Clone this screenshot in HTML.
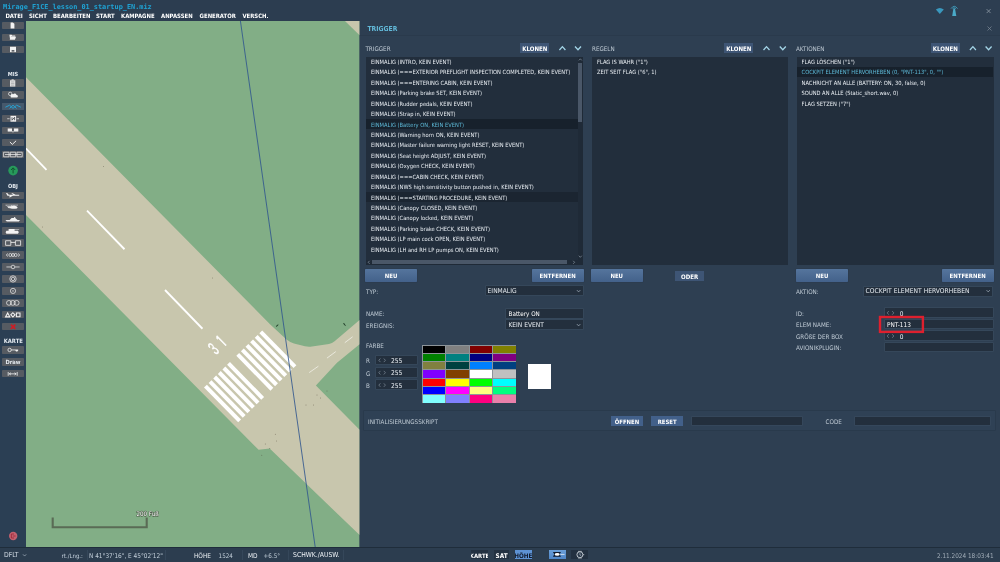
<!DOCTYPE html><html lang="de"><head><meta charset="utf-8"><title>Mirage_F1CE_lesson_01_startup_EN.miz</title><style>
*{box-sizing:border-box}
html,body{margin:0;padding:0;width:1000px;height:562px;overflow:hidden;background:#2d3f52}
body{position:relative;font-family:'DejaVu Sans Condensed','DejaVu Sans','Liberation Sans',sans-serif;font-stretch:condensed;color:#fff;-webkit-font-smoothing:antialiased}
.a{position:absolute;white-space:nowrap;line-height:1}
.t{position:absolute;white-space:nowrap;line-height:1;transform-origin:0 0}
.b{font-weight:bold}
svg{position:absolute;overflow:visible}
#root{position:absolute;left:0;top:0;width:1000px;height:562px;will-change:transform}
</style></head><body><div id="root">
<div class="a" style="left:0.00px;top:0.00px;width:359.60px;height:21.00px;background:#2c3d50;"></div>
<div class="a" style="left:3.00px;top:3.69px;font-size:6.87px;color:#1fa3d4;font-weight:bold;font-family:'DejaVu Sans Mono','Liberation Mono',monospace;font-stretch:normal;">Mirage_F1CE_lesson_01_startup_EN.miz</div>
<div class="a" style="left:5.40px;top:13.47px;font-size:5.95px;color:#fff;font-weight:bold;">DATEI</div>
<div class="a" style="left:29.00px;top:13.47px;font-size:5.95px;color:#fff;font-weight:bold;">SICHT</div>
<div class="a" style="left:53.00px;top:13.47px;font-size:5.95px;color:#fff;font-weight:bold;">BEARBEITEN</div>
<div class="a" style="left:96.00px;top:13.47px;font-size:5.95px;color:#fff;font-weight:bold;">START</div>
<div class="a" style="left:121.00px;top:13.47px;font-size:5.95px;color:#fff;font-weight:bold;">KAMPAGNE</div>
<div class="a" style="left:161.00px;top:13.47px;font-size:5.95px;color:#fff;font-weight:bold;">ANPASSEN</div>
<div class="a" style="left:199.60px;top:13.47px;font-size:5.95px;color:#fff;font-weight:bold;">GENERATOR</div>
<div class="a" style="left:242.40px;top:13.47px;font-size:5.95px;color:#fff;font-weight:bold;">VERSCH.</div>
<div class="a" style="left:0.00px;top:21.00px;width:26.00px;height:526.00px;background:#2b3f54;"></div>
<div class="a" style="left:359.60px;top:0.00px;width:640.40px;height:547.00px;background:#2e3f52;"></div>
<div class="a" style="left:359.60px;top:0.00px;width:640.40px;height:35.30px;background:#2d3e51;"></div>
<div class="a" style="left:359.60px;top:35.20px;width:640.40px;height:1.00px;background:#2a3a4c;"></div>
<svg style="left:26px;top:21px" width="333.6" height="526" viewBox="26 21 333.6 526">
<defs><clipPath id="mc"><rect x="26" y="21" width="333.6" height="526"/></clipPath></defs>
<g clip-path="url(#mc)">
<rect x="26" y="21" width="333.6" height="526" fill="#82ae86"/>
<polygon points="345,21 359.6,21 359.6,35.2" fill="#c8c6ad"/>
<path d="M20,71.2 L270,324.2 L286.5,339.6 Q289.5,342.2 294,343.4 L305,346.2 Q308.5,347 312,346.4 L329,343.9 Q332.2,343.3 334.6,341.2 L359.6,320 L359.6,344.2 L337,362.7 L315.9,385.5 L359.6,429.8 L359.6,535.1 L269.7,448.6 L258.6,449.8 L20,208.9 Z" fill="#c8c6ad"/>
<line x1="-69.00" y1="51.50" x2="-31.50" y2="90.25" stroke="#fff" stroke-width="1.8"/>
<line x1="9.00" y1="131.00" x2="46.50" y2="169.75" stroke="#fff" stroke-width="1.8"/>
<line x1="87.00" y1="210.50" x2="124.50" y2="249.25" stroke="#fff" stroke-width="1.8"/>
<line x1="165.00" y1="290.00" x2="202.50" y2="328.75" stroke="#fff" stroke-width="1.8"/>
<polygon points="262.23,330.40 259.37,333.20 293.54,368.05 296.39,365.25" fill="#fff"/>
<polygon points="257.62,334.92 254.76,337.72 288.92,372.57 291.78,369.77" fill="#fff"/>
<polygon points="253.00,339.44 250.15,342.25 284.31,377.09 287.17,374.29" fill="#fff"/>
<polygon points="248.39,343.97 245.53,346.77 279.70,381.61 282.55,378.81" fill="#fff"/>
<polygon points="243.78,348.49 240.92,351.29 275.08,386.14 277.94,383.34" fill="#fff"/>
<polygon points="239.16,353.01 236.31,355.81 270.47,390.66 273.33,387.86" fill="#fff"/>
<polygon points="229.94,362.06 227.08,364.86 261.24,399.70 264.10,396.90" fill="#fff"/>
<polygon points="225.32,366.58 222.47,369.38 256.63,404.23 259.49,401.43" fill="#fff"/>
<polygon points="220.71,371.10 217.86,373.90 252.02,408.75 254.88,405.95" fill="#fff"/>
<polygon points="216.10,375.62 213.24,378.42 247.41,413.27 250.26,410.47" fill="#fff"/>
<polygon points="211.49,380.15 208.63,382.95 242.79,417.79 245.65,414.99" fill="#fff"/>
<polygon points="206.87,384.67 204.02,387.47 238.18,422.32 241.04,419.52" fill="#fff"/>
<line x1="344.80" y1="342.70" x2="352.60" y2="336.80" stroke="#e9e8dc" stroke-width="1"/>
<line x1="327.00" y1="358.10" x2="335.80" y2="351.60" stroke="#e9e8dc" stroke-width="1"/>
<line x1="309.20" y1="372.60" x2="318.40" y2="366.20" stroke="#e9e8dc" stroke-width="1"/>
<text transform="translate(220.6,351.8) rotate(-44.4) scale(0.62,1)" font-family="IPAGothic,'Liberation Sans',sans-serif" font-size="18" fill="#fff" stroke="#fff" stroke-width="0.5" text-anchor="end" style="font-stretch:normal">3</text>
<text transform="translate(228.7,344.0) rotate(-44.4) scale(0.66,1)" font-family="IPAGothic,'Liberation Sans',sans-serif" font-size="18.5" fill="#fff" stroke="#fff" stroke-width="0.5" text-anchor="end" style="font-stretch:normal">1</text>
<line x1="240.4" y1="20.8" x2="315.2" y2="547" stroke="#30568f" stroke-width="0.85"/>
<path d="M276,326.4 L278.2,324.6 L277.4,326 Z" fill="#1f3b26" stroke="#1f3b26" stroke-width="0.5"/>
<path d="M343.6,323 L345.6,325.6 L344.2,324.8 Z" fill="#1f3b26" stroke="#1f3b26" stroke-width="0.5"/>
<circle cx="103.5" cy="166.5" r="0.45" fill="#4d4335" opacity="0.75"/><circle cx="42.5" cy="227.0" r="0.45" fill="#4d4335" opacity="0.75"/><circle cx="212.5" cy="278.0" r="0.45" fill="#4d4335" opacity="0.75"/><circle cx="327.0" cy="391.0" r="0.45" fill="#4d4335" opacity="0.75"/><circle cx="317.0" cy="395.0" r="0.45" fill="#4d4335" opacity="0.75"/><circle cx="320.4" cy="398.0" r="0.45" fill="#4d4335" opacity="0.75"/><circle cx="306.0" cy="405.0" r="0.45" fill="#4d4335" opacity="0.75"/><circle cx="313.4" cy="405.0" r="0.45" fill="#4d4335" opacity="0.75"/><circle cx="275.3" cy="434.3" r="0.45" fill="#4d4335" opacity="0.75"/><circle cx="276.5" cy="441.0" r="0.45" fill="#4d4335" opacity="0.75"/><circle cx="265.3" cy="444.0" r="0.45" fill="#4d4335" opacity="0.75"/><circle cx="269.8" cy="448.5" r="0.45" fill="#4d4335" opacity="0.75"/><circle cx="261.8" cy="455.3" r="0.45" fill="#4d4335" opacity="0.75"/>
<path d="M52.7,517.5 V527.2 H146.7 V517.5" fill="none" stroke="#5a6b55" stroke-width="2.1"/>
<text x="147.6" y="516.4" text-anchor="middle" font-family="'DejaVu Sans Condensed','DejaVu Sans',sans-serif" font-size="6.2" fill="#fff" stroke="#4a5a46" stroke-width="1.1" paint-order="stroke" style="font-stretch:condensed">200 Fuß</text>
</g></svg>
<div class="a" style="left:2.1px;top:21.80px;width:21.9px;height:7.3px;background:#565b62;border-radius:0.8px"></div>
<div class="a" style="left:2.1px;top:33.80px;width:21.9px;height:7.3px;background:#565b62;border-radius:0.8px"></div>
<div class="a" style="left:2.1px;top:45.80px;width:21.9px;height:7.3px;background:#565b62;border-radius:0.8px"></div>
<div class="a" style="left:2.1px;top:79.30px;width:21.9px;height:7.3px;background:#565b62;border-radius:0.8px"></div>
<div class="a" style="left:2.1px;top:91.23px;width:21.9px;height:7.3px;background:#565b62;border-radius:0.8px"></div>
<div class="a" style="left:2.1px;top:103.16px;width:21.9px;height:7.3px;background:#565b62;border-radius:0.8px"></div>
<div class="a" style="left:2.1px;top:115.09px;width:21.9px;height:7.3px;background:#565b62;border-radius:0.8px"></div>
<div class="a" style="left:2.1px;top:127.02px;width:21.9px;height:7.3px;background:#565b62;border-radius:0.8px"></div>
<div class="a" style="left:2.1px;top:138.95px;width:21.9px;height:7.3px;background:#565b62;border-radius:0.8px"></div>
<div class="a" style="left:2.1px;top:150.88px;width:21.9px;height:7.3px;background:#565b62;border-radius:0.8px"></div>
<div class="a" style="left:2.1px;top:191.50px;width:21.9px;height:7.3px;background:#565b62;border-radius:0.8px"></div>
<div class="a" style="left:2.1px;top:203.47px;width:21.9px;height:7.3px;background:#565b62;border-radius:0.8px"></div>
<div class="a" style="left:2.1px;top:215.44px;width:21.9px;height:7.3px;background:#565b62;border-radius:0.8px"></div>
<div class="a" style="left:2.1px;top:227.41px;width:21.9px;height:7.3px;background:#565b62;border-radius:0.8px"></div>
<div class="a" style="left:2.1px;top:239.38px;width:21.9px;height:7.3px;background:#565b62;border-radius:0.8px"></div>
<div class="a" style="left:2.1px;top:251.35px;width:21.9px;height:7.3px;background:#565b62;border-radius:0.8px"></div>
<div class="a" style="left:2.1px;top:263.32px;width:21.9px;height:7.3px;background:#565b62;border-radius:0.8px"></div>
<div class="a" style="left:2.1px;top:275.29px;width:21.9px;height:7.3px;background:#565b62;border-radius:0.8px"></div>
<div class="a" style="left:2.1px;top:287.26px;width:21.9px;height:7.3px;background:#565b62;border-radius:0.8px"></div>
<div class="a" style="left:2.1px;top:299.23px;width:21.9px;height:7.3px;background:#565b62;border-radius:0.8px"></div>
<div class="a" style="left:2.1px;top:311.20px;width:21.9px;height:7.3px;background:#565b62;border-radius:0.8px"></div>
<div class="a" style="left:2.1px;top:323.17px;width:21.9px;height:7.3px;background:#565b62;border-radius:0.8px"></div>
<div class="a" style="left:2.1px;top:346.30px;width:21.9px;height:7.3px;background:#565b62;border-radius:0.8px"></div>
<div class="a" style="left:2.1px;top:358.30px;width:21.9px;height:7.3px;background:#565b62;border-radius:0.8px"></div>
<div class="a" style="left:2.1px;top:370.20px;width:21.9px;height:7.3px;background:#565b62;border-radius:0.8px"></div>
<div class="a b" style="left:0;top:72.4px;width:26px;text-align:center;font-size:5.6px;color:#e3e9ef">MIS</div>
<div class="a b" style="left:0;top:184px;width:26px;text-align:center;font-size:5.6px;color:#e3e9ef">OBJ</div>
<div class="a b" style="left:0;top:339.2px;width:26.6px;text-align:center;font-size:5.87px;color:#e3e9ef">KARTE</div>
<div class="a b" style="left:2.1px;top:360px;width:21.9px;text-align:center;font-size:5.7px;color:#e3e9ef">Draw</div>
<div class="a" style="left:2.1px;top:103.16px;width:21.9px;height:7.3px;background:#46596c;border-radius:0.8px"></div>
<svg style="left:0;top:0" width="1000" height="562">
<path d="M10.6,22.45 h2.2 l1.6,1.4 v4.6 h-3.8 Z" fill="#f2f2f2"/>
<path d="M9.4,34.85 h2.2 l0.6,0.7 h3 v1 h-4.2 l-1,2.5 Z M10.9,36.85 h5.2 l-1.2,2.8 h-5.2 Z" fill="#f2f2f2"/>
<path d="M10,46.75 h6 v5.4 h-6 Z" fill="#f2f2f2"/><rect x="11.6" y="50.05" width="2.8" height="1.6" fill="#565b62"/>
<rect x="10" y="80.25" width="5.3" height="6.3" fill="#dedede"/><rect x="11.6" y="79.35" width="2.1" height="1.3" fill="#dedede"/><path d="M11,81.95 h3.3 M11,83.55 h3.3 M11,85.15 h3.3" stroke="#8a8d91" stroke-width="0.5"/>
<circle cx="10.2" cy="93.88" r="1.7" fill="none" stroke="#f2f2f2" stroke-width="0.7"/><path d="M10.8,95.88 a1.5,1.5 0 0 1 2.4,-1.6 a2,2 0 0 1 3.4,0.6 a1.3,1.3 0 0 1 0,2.6 h-5.4 a1,1 0 0 1 -0.4,-1.6 Z" fill="#f2f2f2"/>
<path d="M5.4,107.21 L9.6,105.21 L13,108.41 L16.6,105.21 L20.8,107.21 M9.6,108.41 L13,105.21 L16.6,108.41" fill="none" stroke="#27a0d0" stroke-width="1"/>
<path d="M7.2,118.74 H9.6 M16.6,118.74 H19" stroke="#f2f2f2" stroke-width="0.7"/><rect x="10.5" y="115.84" width="5.6" height="5.8" fill="#f2f2f2"/><path d="M12,117.24 v3 l2.6,-3 v3" fill="none" stroke="#3a3f46" stroke-width="0.8"/>
<rect x="7.7" y="128.47" width="4.3" height="3.1" fill="#f2f2f2"/><rect x="13.9" y="128.47" width="4.4" height="3.1" fill="#f2f2f2"/><rect x="12" y="131.27" width="1.9" height="1" fill="#c9c9c9"/>
<path d="M9.9,142.00 l2.4,2.4 l3.8,-3.6" fill="none" stroke="#f2f2f2" stroke-width="1"/>
<path d="M3.6,152.23 h5.4 v4.6 h-5.4 Z M10.3,152.23 h5.4 v4.6 h-5.4 Z M17,152.23 h5.2 v4.6 h-5.2 Z M5,154.53 H21" fill="none" stroke="#e4e4e4" stroke-width="0.8"/>
<circle cx="13.1" cy="170.6" r="4.8" fill="#279a5b"/><path d="M13.1,173.4 V168 M11,170 L13.1,167.8 L15.2,170" fill="none" stroke="#0e4f2b" stroke-width="0.9"/>
<path d="M6,192.95 l1.2,0 l1.6,1.8 h4.4 l-2,-1.6 h1.4 l3,1.6 h3.2 q1.4,0.3 0,0.9 h-6 l-2.6,1.6 h-1.4 l1.4,-1.6 h-2.8 Z" fill="#f2f2f2"/>
<path d="M5.4,205.12 H18 M11.6,205.12 v1 M8.2,206.52 h2 q4.6,-1.6 7,0.6 q0.6,1.4 -1.6,1.4 h-3.4 l-4,-1 Z M6.4,205.52 l2.4,2.2" fill="#f2f2f2" stroke="#f2f2f2" stroke-width="0.5"/>
<path d="M5.4,219.89 h14.6 l-1.2,1.6 h-12 Z M9.6,219.89 l2,-2 h2.2 l0.6,-1 h0.8 v1 l2.4,2 Z" fill="#f2f2f2"/>
<path d="M6.4,230.86 h11.6 q1.6,1.4 0,2.8 h-11.6 q-1.6,-1.4 0,-2.8 Z M8.6,230.86 h6 v-1.8 h-6 Z M14.6,229.46 h4.6 v0.6 h-4.6 Z" fill="#f2f2f2"/>
<path d="M5.6,240.73 h5.2 v4.6 h-5.2 Z M15.4,240.73 h5.2 v4.6 h-5.2 Z M10.8,242.43 h4.6" fill="none" stroke="#f2f2f2" stroke-width="0.8"/>
<circle cx="10.3" cy="255.00" r="1.5" fill="none" stroke="#f2f2f2" stroke-width="0.7"/><circle cx="13" cy="255.00" r="1.5" fill="none" stroke="#f2f2f2" stroke-width="0.7"/><circle cx="15.7" cy="255.00" r="1.5" fill="none" stroke="#f2f2f2" stroke-width="0.7"/><path d="M8,253.50 l-1.8,1.5 l1.8,1.5 M18,253.50 l1.8,1.5 l-1.8,1.5" fill="none" stroke="#f2f2f2" stroke-width="0.7"/>
<path d="M6.4,266.97 H11 M15,266.97 H19.6" stroke="#f2f2f2" stroke-width="0.7"/><circle cx="13" cy="266.97" r="1.8" fill="none" stroke="#f2f2f2" stroke-width="0.7"/>
<circle cx="13" cy="278.94" r="3.2" fill="none" stroke="#f2f2f2" stroke-width="0.7"/><circle cx="13" cy="278.94" r="1.7" fill="none" stroke="#f2f2f2" stroke-width="0.7"/>
<circle cx="13" cy="290.91" r="2.6" fill="none" stroke="#f2f2f2" stroke-width="0.7"/><circle cx="13" cy="290.91" r="0.7" fill="#f2f2f2"/>
<ellipse cx="9" cy="302.88" rx="2.5" ry="2.4" fill="none" stroke="#f2f2f2" stroke-width="0.7"/><ellipse cx="12.8" cy="302.88" rx="2.5" ry="2.4" fill="none" stroke="#f2f2f2" stroke-width="0.7"/><ellipse cx="16.6" cy="302.88" rx="2.5" ry="2.4" fill="none" stroke="#f2f2f2" stroke-width="0.7"/>
<path d="M5.6,316.85 l2.1,-3.9 l2.1,3.9 Z M12.9,312.75 l2.1,2.1 l-2.1,2.1 l-2.1,-2.1 Z M16.4,313.05 h3.6 v3.6 h-3.6 Z" fill="none" stroke="#f2f2f2" stroke-width="1.05"/>
<path d="M10.9,324.62 l4.4,4.4 M15.3,324.62 l-4.4,4.4" stroke="#cf1c24" stroke-width="1.7"/>
<circle cx="9.6" cy="349.95" r="1.7" fill="none" stroke="#f2f2f2" stroke-width="0.8"/><path d="M11.3,349.95 H18.2" stroke="#f2f2f2" stroke-width="0.8"/><path d="M15.2,349.95 h3 l-0.8,1.5 h-1.4 Z" fill="#f2f2f2"/>
<path d="M8.2,371.95 v3.8 M17.2,371.95 v3.8 M9.2,373.85 H16.2 M10.8,372.75 l-1.5,1.1 l1.5,1.1 M14.6,372.75 l1.5,1.1 l-1.5,1.1" fill="none" stroke="#f2f2f2" stroke-width="0.8"/>
<circle cx="13.2" cy="536" r="4.2" fill="#c3606e"/><path d="M14,534 h-2.6 v4 h2.6 M12.8,536 h2.8" fill="none" stroke="#9c2434" stroke-width="0.8"/>
</svg>
<div class="a" style="left:367.40px;top:26.36px;font-size:6.78px;color:#62b9d8;font-weight:bold;">TRIGGER</div>
<div class="a" style="left:365.40px;top:46.41px;font-size:6.25px;color:#bfcad4;">TRIGGER</div>
<div class="a" style="left:592.00px;top:46.41px;font-size:6.25px;color:#bfcad4;">REGELN</div>
<div class="a" style="left:796.00px;top:46.41px;font-size:6.25px;color:#bfcad4;">AKTIONEN</div>
<div class="a" style="left:520.30px;top:43.00px;width:29.00px;height:10.40px;background:#3e5575;"></div>
<div class="a" style="left:520.30px;top:46.14px;font-size:6.10px;color:#fff;font-weight:bold;width:29.00px;text-align:center;">KLONEN</div>
<div class="a" style="left:724.30px;top:43.00px;width:29.00px;height:10.40px;background:#3e5575;"></div>
<div class="a" style="left:724.30px;top:46.14px;font-size:6.10px;color:#fff;font-weight:bold;width:29.00px;text-align:center;">KLONEN</div>
<div class="a" style="left:930.80px;top:43.00px;width:29.00px;height:10.40px;background:#3e5575;"></div>
<div class="a" style="left:930.80px;top:46.14px;font-size:6.10px;color:#fff;font-weight:bold;width:29.00px;text-align:center;">KLONEN</div>
<svg style="left:0;top:0" width="1000" height="562"><polyline points="559.40,49.95 562.40,46.65 565.40,49.95" fill="none" stroke="#a3d4e6" stroke-width="1.30"/></svg>
<svg style="left:0;top:0" width="1000" height="562"><polyline points="763.50,49.95 766.50,46.65 769.50,49.95" fill="none" stroke="#a3d4e6" stroke-width="1.30"/></svg>
<svg style="left:0;top:0" width="1000" height="562"><polyline points="969.90,49.95 972.90,46.65 975.90,49.95" fill="none" stroke="#a3d4e6" stroke-width="1.30"/></svg>
<svg style="left:0;top:0" width="1000" height="562"><polyline points="575.00,46.45 578.00,49.75 581.00,46.45" fill="none" stroke="#a3d4e6" stroke-width="1.30"/></svg>
<svg style="left:0;top:0" width="1000" height="562"><polyline points="779.80,46.45 782.80,49.75 785.80,46.45" fill="none" stroke="#a3d4e6" stroke-width="1.30"/></svg>
<svg style="left:0;top:0" width="1000" height="562"><polyline points="985.60,46.45 988.60,49.75 991.60,46.45" fill="none" stroke="#a3d4e6" stroke-width="1.30"/></svg>
<div class="a" style="left:366.00px;top:56.60px;width:217.00px;height:208.40px;background:#222e3c;"></div>
<div class="a" style="left:592.00px;top:56.60px;width:196.00px;height:208.40px;background:#222e3c;"></div>
<div class="a" style="left:796.50px;top:56.60px;width:197.00px;height:208.40px;background:#222e3c;"></div>
<div class="a" style="left:366.00px;top:119.02px;width:211.60px;height:10.42px;background:#17212c;"></div>
<div class="a" style="left:366.00px;top:191.96px;width:211.60px;height:10.42px;background:#1b2531;"></div>
<div class="a" style="left:371.00px;top:60.05px;font-size:5.73px;color:#e8edf2;">EINMALIG (INTRO, KEIN EVENT)</div>
<div class="a" style="left:371.00px;top:70.47px;font-size:5.73px;color:#e8edf2;">EINMALIG (===EXTERIOR PREFLIGHT INSPECTION COMPLETED, KEIN EVENT)</div>
<div class="a" style="left:371.00px;top:80.89px;font-size:5.73px;color:#e8edf2;">EINMALIG (===ENTERING CABIN, KEIN EVENT)</div>
<div class="a" style="left:371.00px;top:91.31px;font-size:5.73px;color:#e8edf2;">EINMALIG (Parking brake SET, KEIN EVENT)</div>
<div class="a" style="left:371.00px;top:101.73px;font-size:5.73px;color:#e8edf2;">EINMALIG (Rudder pedals, KEIN EVENT)</div>
<div class="a" style="left:371.00px;top:112.15px;font-size:5.73px;color:#e8edf2;">EINMALIG (Strap in, KEIN EVENT)</div>
<div class="a" style="left:371.00px;top:122.57px;font-size:5.73px;color:#5db8d6;">EINMALIG (Battery ON, KEIN EVENT)</div>
<div class="a" style="left:371.00px;top:132.99px;font-size:5.73px;color:#e8edf2;">EINMALIG (Warning horn ON, KEIN EVENT)</div>
<div class="a" style="left:371.00px;top:143.41px;font-size:5.73px;color:#e8edf2;">EINMALIG (Master failure warning light RESET, KEIN EVENT)</div>
<div class="a" style="left:371.00px;top:153.83px;font-size:5.73px;color:#e8edf2;">EINMALIG (Seat height ADJUST, KEIN EVENT)</div>
<div class="a" style="left:371.00px;top:164.25px;font-size:5.73px;color:#e8edf2;">EINMALIG (Oxygen CHECK, KEIN EVENT)</div>
<div class="a" style="left:371.00px;top:174.67px;font-size:5.73px;color:#e8edf2;">EINMALIG (===CABIN CHECK, KEIN EVENT)</div>
<div class="a" style="left:371.00px;top:185.09px;font-size:5.73px;color:#e8edf2;">EINMALIG (NWS high sensitivity button pushed in, KEIN EVENT)</div>
<div class="a" style="left:371.00px;top:195.51px;font-size:5.73px;color:#e8edf2;">EINMALIG (===STARTING PROCEDURE, KEIN EVENT)</div>
<div class="a" style="left:371.00px;top:205.93px;font-size:5.73px;color:#e8edf2;">EINMALIG (Canopy CLOSED, KEIN EVENT)</div>
<div class="a" style="left:371.00px;top:216.35px;font-size:5.73px;color:#e8edf2;">EINMALIG (Canopy locked, KEIN EVENT)</div>
<div class="a" style="left:371.00px;top:226.77px;font-size:5.73px;color:#e8edf2;">EINMALIG (Parking brake CHECK, KEIN EVENT)</div>
<div class="a" style="left:371.00px;top:237.19px;font-size:5.73px;color:#e8edf2;">EINMALIG (LP main cock OPEN, KEIN EVENT)</div>
<div class="a" style="left:371.00px;top:247.61px;font-size:5.73px;color:#e8edf2;">EINMALIG (LH and RH LP pumps ON, KEIN EVENT)</div>
<div class="a" style="left:577.60px;top:56.60px;width:5.40px;height:203.00px;background:#1f2a37;"></div>
<div class="a" style="left:578.20px;top:63.00px;width:3.80px;height:58.80px;background:#4a5768;"></div>
<svg style="left:0;top:0" width="1000" height="562"><polyline points="578.80,60.40 580.30,58.80 581.80,60.40" fill="none" stroke="#8a96a3" stroke-width="0.70"/></svg>
<svg style="left:0;top:0" width="1000" height="562"><polyline points="578.80,255.70 580.30,257.30 581.80,255.70" fill="none" stroke="#8a96a3" stroke-width="0.70"/></svg>
<div class="a" style="left:366.00px;top:259.60px;width:217.00px;height:5.40px;background:#1f2a37;"></div>
<div class="a" style="left:372.00px;top:260.40px;width:195.00px;height:3.80px;background:#4a5768;"></div>
<svg style="left:0;top:0" width="1000" height="562"><polyline points="369.6,260.8 368.2,262.3 369.6,263.8" fill="none" stroke="#8a96a3" stroke-width="0.7"/><polyline points="573.2,260.8 574.6,262.3 573.2,263.8" fill="none" stroke="#8a96a3" stroke-width="0.7"/></svg>
<div class="a" style="left:597.00px;top:60.05px;font-size:5.73px;color:#e8edf2;">FLAG IS WAHR ("1")</div>
<div class="a" style="left:597.00px;top:70.47px;font-size:5.73px;color:#e8edf2;">ZEIT SEIT FLAG ("6", 1)</div>
<div class="a" style="left:796.50px;top:66.92px;width:196.50px;height:10.42px;background:#17212c;"></div>
<div class="a" style="left:801.60px;top:60.05px;font-size:5.73px;color:#e8edf2;">FLAG LÖSCHEN ("1")</div>
<div class="a" style="left:801.60px;top:70.47px;font-size:5.73px;color:#5db8d6;">COCKPIT ELEMENT HERVORHEBEN (0, "PNT-113", 0, "")</div>
<div class="a" style="left:801.60px;top:80.89px;font-size:5.73px;color:#e8edf2;">NACHRICHT AN ALLE (BATTERY: ON, 30, false, 0)</div>
<div class="a" style="left:801.60px;top:91.31px;font-size:5.73px;color:#e8edf2;">SOUND AN ALLE (Static_short.wav, 0)</div>
<div class="a" style="left:801.60px;top:101.73px;font-size:5.73px;color:#e8edf2;">FLAG SETZEN ("7")</div>
<div class="a" style="left:365.00px;top:269.40px;width:52.00px;height:12.50px;background:linear-gradient(#55759d,#43618a);border-radius:0.8px;box-shadow:0 0 0 0.5px #2a3a4c;"></div>
<div class="a" style="left:365.00px;top:273.12px;font-size:6.00px;color:#fff;font-weight:bold;width:52.00px;text-align:center;">NEU</div>
<div class="a" style="left:531.70px;top:269.40px;width:52.00px;height:12.50px;background:linear-gradient(#55759d,#43618a);border-radius:0.8px;box-shadow:0 0 0 0.5px #2a3a4c;"></div>
<div class="a" style="left:531.70px;top:273.12px;font-size:6.00px;color:#fff;font-weight:bold;width:52.00px;text-align:center;">ENTFERNEN</div>
<div class="a" style="left:590.70px;top:269.40px;width:52.00px;height:12.50px;background:linear-gradient(#55759d,#43618a);border-radius:0.8px;box-shadow:0 0 0 0.5px #2a3a4c;"></div>
<div class="a" style="left:590.70px;top:273.12px;font-size:6.00px;color:#fff;font-weight:bold;width:52.00px;text-align:center;">NEU</div>
<div class="a" style="left:675.20px;top:270.60px;width:28.80px;height:10.40px;background:#3e5575;"></div>
<div class="a" style="left:675.20px;top:273.54px;font-size:6.10px;color:#fff;font-weight:bold;width:28.80px;text-align:center;">ODER</div>
<div class="a" style="left:796.00px;top:269.40px;width:52.00px;height:12.50px;background:linear-gradient(#55759d,#43618a);border-radius:0.8px;box-shadow:0 0 0 0.5px #2a3a4c;"></div>
<div class="a" style="left:796.00px;top:273.12px;font-size:6.00px;color:#fff;font-weight:bold;width:52.00px;text-align:center;">NEU</div>
<div class="a" style="left:941.60px;top:269.40px;width:52.00px;height:12.50px;background:linear-gradient(#55759d,#43618a);border-radius:0.8px;box-shadow:0 0 0 0.5px #2a3a4c;"></div>
<div class="a" style="left:941.60px;top:273.12px;font-size:6.00px;color:#fff;font-weight:bold;width:52.00px;text-align:center;">ENTFERNEN</div>
<div class="a" style="left:366.00px;top:289.41px;font-size:6.25px;color:#bfcad4;">TYP:</div>
<div class="a" style="left:486.00px;top:286.40px;width:97.40px;height:8.90px;background:#232f3d;box-shadow:0 0 0 0.6px #3a4c60;"></div>
<div class="a" style="left:487.60px;top:288.17px;font-size:6.65px;color:#e8edf2;">EINMALIG</div>
<svg style="left:0;top:0" width="1000" height="562"><polyline points="576.90,290.10 578.60,291.90 580.30,290.10" fill="none" stroke="#a9b6c3" stroke-width="0.70"/></svg>
<div class="a" style="left:366.00px;top:311.41px;font-size:6.25px;color:#bfcad4;">NAME:</div>
<div class="a" style="left:506.40px;top:309.00px;width:77.00px;height:8.90px;background:#232f3d;box-shadow:0 0 0 0.6px #3a4c60;"></div>
<div class="a" style="left:508.60px;top:311.01px;font-size:6.25px;color:#fff;">Battery ON</div>
<div class="a" style="left:366.00px;top:323.01px;font-size:6.25px;color:#bfcad4;">EREIGNIS:</div>
<div class="a" style="left:506.40px;top:320.20px;width:77.00px;height:8.90px;background:#232f3d;box-shadow:0 0 0 0.6px #3a4c60;"></div>
<div class="a" style="left:508.40px;top:322.10px;font-size:6.62px;color:#e8edf2;">KEIN EVENT</div>
<svg style="left:0;top:0" width="1000" height="562"><polyline points="576.90,324.10 578.60,325.90 580.30,324.10" fill="none" stroke="#a9b6c3" stroke-width="0.70"/></svg>
<div class="a" style="left:366.00px;top:343.01px;font-size:6.25px;color:#bfcad4;">FARBE</div>
<div class="a" style="left:366.00px;top:358.11px;font-size:6.25px;color:#bfcad4;">R</div>
<div class="a" style="left:375.60px;top:355.60px;width:41.00px;height:8.90px;background:#232f3d;box-shadow:0 0 0 0.6px #3a4c60;"></div>
<svg style="left:0;top:0" width="1000" height="562"><polyline points="380.40,358.50 378.80,360.30 380.40,362.10" fill="none" stroke="#7f8c99" stroke-width="0.7"/><polyline points="383.80,358.50 385.40,360.30 383.80,362.10" fill="none" stroke="#7f8c99" stroke-width="0.7"/></svg>
<div class="a" style="left:391.00px;top:357.92px;font-size:6.60px;color:#e8edf2;">255</div>
<div class="a" style="left:366.00px;top:370.51px;font-size:6.25px;color:#bfcad4;">G</div>
<div class="a" style="left:375.60px;top:368.00px;width:41.00px;height:8.90px;background:#232f3d;box-shadow:0 0 0 0.6px #3a4c60;"></div>
<svg style="left:0;top:0" width="1000" height="562"><polyline points="380.40,370.90 378.80,372.70 380.40,374.50" fill="none" stroke="#7f8c99" stroke-width="0.7"/><polyline points="383.80,370.90 385.40,372.70 383.80,374.50" fill="none" stroke="#7f8c99" stroke-width="0.7"/></svg>
<div class="a" style="left:391.00px;top:370.32px;font-size:6.60px;color:#e8edf2;">255</div>
<div class="a" style="left:366.00px;top:382.91px;font-size:6.25px;color:#bfcad4;">B</div>
<div class="a" style="left:375.60px;top:380.40px;width:41.00px;height:8.90px;background:#232f3d;box-shadow:0 0 0 0.6px #3a4c60;"></div>
<svg style="left:0;top:0" width="1000" height="562"><polyline points="380.40,383.30 378.80,385.10 380.40,386.90" fill="none" stroke="#7f8c99" stroke-width="0.7"/><polyline points="383.80,383.30 385.40,385.10 383.80,386.90" fill="none" stroke="#7f8c99" stroke-width="0.7"/></svg>
<div class="a" style="left:391.00px;top:382.72px;font-size:6.60px;color:#e8edf2;">255</div>
<div class="a" style="left:422.40px;top:345.00px;width:94.00px;height:58.03px;background:#8d9499;"></div>
<div class="a" style="left:422.90px;top:345.50px;width:22.50px;height:7.29px;background:#000000;"></div>
<div class="a" style="left:446.40px;top:345.50px;width:22.50px;height:7.29px;background:#808080;"></div>
<div class="a" style="left:469.90px;top:345.50px;width:22.50px;height:7.29px;background:#800000;"></div>
<div class="a" style="left:493.40px;top:345.50px;width:22.50px;height:7.29px;background:#808000;"></div>
<div class="a" style="left:422.90px;top:353.79px;width:22.50px;height:7.29px;background:#008000;"></div>
<div class="a" style="left:446.40px;top:353.79px;width:22.50px;height:7.29px;background:#008080;"></div>
<div class="a" style="left:469.90px;top:353.79px;width:22.50px;height:7.29px;background:#000080;"></div>
<div class="a" style="left:493.40px;top:353.79px;width:22.50px;height:7.29px;background:#800080;"></div>
<div class="a" style="left:422.90px;top:362.08px;width:22.50px;height:7.29px;background:#808040;"></div>
<div class="a" style="left:446.40px;top:362.08px;width:22.50px;height:7.29px;background:#004040;"></div>
<div class="a" style="left:469.90px;top:362.08px;width:22.50px;height:7.29px;background:#0080ff;"></div>
<div class="a" style="left:493.40px;top:362.08px;width:22.50px;height:7.29px;background:#004080;"></div>
<div class="a" style="left:422.90px;top:370.37px;width:22.50px;height:7.29px;background:#8000ff;"></div>
<div class="a" style="left:446.40px;top:370.37px;width:22.50px;height:7.29px;background:#804000;"></div>
<div class="a" style="left:469.90px;top:370.37px;width:22.50px;height:7.29px;background:#ffffff;"></div>
<div class="a" style="left:493.40px;top:370.37px;width:22.50px;height:7.29px;background:#c0c0c0;"></div>
<div class="a" style="left:422.90px;top:378.66px;width:22.50px;height:7.29px;background:#ff0000;"></div>
<div class="a" style="left:446.40px;top:378.66px;width:22.50px;height:7.29px;background:#ffff00;"></div>
<div class="a" style="left:469.90px;top:378.66px;width:22.50px;height:7.29px;background:#00ff00;"></div>
<div class="a" style="left:493.40px;top:378.66px;width:22.50px;height:7.29px;background:#00ffff;"></div>
<div class="a" style="left:422.90px;top:386.95px;width:22.50px;height:7.29px;background:#0000ff;"></div>
<div class="a" style="left:446.40px;top:386.95px;width:22.50px;height:7.29px;background:#ff00ff;"></div>
<div class="a" style="left:469.90px;top:386.95px;width:22.50px;height:7.29px;background:#ffff80;"></div>
<div class="a" style="left:493.40px;top:386.95px;width:22.50px;height:7.29px;background:#00ff80;"></div>
<div class="a" style="left:422.90px;top:395.24px;width:22.50px;height:7.29px;background:#80ffff;"></div>
<div class="a" style="left:446.40px;top:395.24px;width:22.50px;height:7.29px;background:#8080ff;"></div>
<div class="a" style="left:469.90px;top:395.24px;width:22.50px;height:7.29px;background:#ff0080;"></div>
<div class="a" style="left:493.40px;top:395.24px;width:22.50px;height:7.29px;background:#ea80aa;"></div>
<div class="a" style="left:528.00px;top:364.40px;width:23.40px;height:24.20px;background:#ffffff;"></div>
<div class="a" style="left:364.00px;top:410.60px;width:631.00px;height:19.00px;background:#2f4155;box-shadow:0 0 0 0.6px #27374a;"></div>
<div class="a" style="left:368.00px;top:419.41px;font-size:6.25px;color:#bfcad4;">INITIALISIERUNGSSKRIPT</div>
<div class="a" style="left:611.00px;top:416.00px;width:32.00px;height:10.00px;background:#42608a;"></div>
<div class="a" style="left:611.00px;top:418.97px;font-size:5.95px;color:#fff;font-weight:bold;width:32.00px;text-align:center;">ÖFFNEN</div>
<div class="a" style="left:651.40px;top:416.00px;width:31.60px;height:10.00px;background:#42608a;"></div>
<div class="a" style="left:651.40px;top:418.97px;font-size:5.95px;color:#fff;font-weight:bold;width:31.60px;text-align:center;">RESET</div>
<div class="a" style="left:692.00px;top:416.60px;width:109.60px;height:8.80px;background:#232f3d;box-shadow:0 0 0 0.6px #3a4c60;"></div>
<div class="a" style="left:825.60px;top:419.01px;font-size:6.25px;color:#bfcad4;">CODE</div>
<div class="a" style="left:855.00px;top:416.60px;width:135.40px;height:8.80px;background:#232f3d;box-shadow:0 0 0 0.6px #3a4c60;"></div>
<div class="a" style="left:796.00px;top:289.31px;font-size:6.25px;color:#bfcad4;">AKTION:</div>
<div class="a" style="left:863.80px;top:286.70px;width:128.70px;height:8.90px;background:#232f3d;box-shadow:0 0 0 0.6px #3a4c60;"></div>
<div class="a" style="left:865.60px;top:288.13px;font-size:6.70px;color:#e8edf2;">COCKPIT ELEMENT HERVORHEBEN</div>
<svg style="left:0;top:0" width="1000" height="562"><polyline points="986.50,290.10 988.20,291.90 989.90,290.10" fill="none" stroke="#a9b6c3" stroke-width="0.70"/></svg>
<div class="a" style="left:796.00px;top:310.71px;font-size:6.25px;color:#bfcad4;">ID:</div>
<div class="a" style="left:884.50px;top:308.00px;width:108.10px;height:8.90px;background:#232f3d;box-shadow:0 0 0 0.6px #3a4c60;"></div>
<div class="a" style="left:796.00px;top:322.31px;font-size:6.25px;color:#bfcad4;">ELEM NAME:</div>
<div class="a" style="left:884.50px;top:319.60px;width:108.10px;height:8.90px;background:#232f3d;box-shadow:0 0 0 0.6px #3a4c60;"></div>
<div class="a" style="left:796.00px;top:333.81px;font-size:6.25px;color:#bfcad4;">GRÖßE DER BOX</div>
<div class="a" style="left:884.50px;top:331.10px;width:108.10px;height:8.90px;background:#232f3d;box-shadow:0 0 0 0.6px #3a4c60;"></div>
<div class="a" style="left:796.00px;top:345.31px;font-size:6.25px;color:#bfcad4;">AVIONIKPLUGIN:</div>
<div class="a" style="left:884.50px;top:342.60px;width:108.10px;height:8.90px;background:#232f3d;box-shadow:0 0 0 0.6px #3a4c60;"></div>
<svg style="left:0;top:0" width="1000" height="562"><polyline points="888.80,311.10 887.20,312.90 888.80,314.70" fill="none" stroke="#7f8c99" stroke-width="0.7"/><polyline points="892.20,311.10 893.80,312.90 892.20,314.70" fill="none" stroke="#7f8c99" stroke-width="0.7"/></svg>
<div class="a" style="left:899.80px;top:310.70px;font-size:6.50px;color:#e8edf2;">0</div>
<svg style="left:0;top:0" width="1000" height="562"><polyline points="888.80,334.20 887.20,336.00 888.80,337.80" fill="none" stroke="#7f8c99" stroke-width="0.7"/><polyline points="892.20,334.20 893.80,336.00 892.20,337.80" fill="none" stroke="#7f8c99" stroke-width="0.7"/></svg>
<div class="a" style="left:899.80px;top:333.80px;font-size:6.50px;color:#e8edf2;">0</div>
<div class="a" style="left:887.00px;top:322.24px;font-size:6.45px;color:#fff;">PNT-113</div>
<svg style="left:0;top:0" width="1000" height="562"><rect x="880" y="317" width="42.9" height="14.9" fill="none" stroke="#de202e" stroke-width="2.4"/></svg>
<svg style="left:0;top:0" width="1000" height="562">
<path d="M935.9,9.6 Q939.8,6.2 943.8,9.6 L939.8,13.9 Z" fill="#3a98be"/>
<path d="M952.2,16 L953.4,8.4 L955,8.4 L956.3,16 Z" fill="#4aaac8"/>
<path d="M951,8.6 Q954.2,4 957.6,8.6" fill="none" stroke="#3f9cbc" stroke-width="0.9"/>
<path d="M952.4,8.8 Q954.2,6.4 956.1,8.8" fill="none" stroke="#3f9cbc" stroke-width="0.8"/>
<path d="M986.6,9.1 L990.6,13.1 M990.6,9.1 L986.6,13.1" stroke="#8e9aa6" stroke-width="0.8"/>
<path d="M987.5,26.5 L991.5,30.5 M991.5,26.5 L987.5,30.5" stroke="#7e8b98" stroke-width="0.7"/>
</svg>
<div class="a" style="left:0.00px;top:547.00px;width:1000.00px;height:15.00px;background:#2c3d4f;"></div>
<div class="a" style="left:0.00px;top:547.00px;width:1000.00px;height:1.20px;background:#1f2d3b;"></div>
<div class="a" style="left:4.00px;top:552.35px;font-size:6.80px;color:#d3dce5;">DFLT</div>
<svg style="left:0;top:0" width="1000" height="562"><polyline points="23.00,554.35 24.60,556.05 26.20,554.35" fill="none" stroke="#a9b6c3" stroke-width="0.70"/></svg>
<div class="a" style="left:61.60px;top:553.02px;font-size:6.00px;color:#c3cfda;">rt./Lng.:</div>
<div class="a" style="left:87.00px;top:550.00px;width:0.60px;height:9.50px;background:#35475a;"></div>
<div class="a" style="left:89.00px;top:552.64px;font-size:6.45px;color:#c3cfda;">N 41°37'16", E 45°02'12"</div>
<div class="a" style="left:165.40px;top:550.00px;width:0.60px;height:9.50px;background:#35475a;"></div>
<div class="a" style="left:194.00px;top:552.64px;font-size:6.45px;color:#eef2f6;">HÖHE</div>
<div class="a" style="left:218.60px;top:552.81px;font-size:6.25px;color:#c3cfda;">1524</div>
<div class="a" style="left:242.00px;top:550.00px;width:0.60px;height:9.50px;background:#35475a;"></div>
<div class="a" style="left:248.00px;top:552.60px;font-size:6.50px;color:#eef2f6;">MD</div>
<div class="a" style="left:263.60px;top:552.81px;font-size:6.25px;color:#c3cfda;">+6.5°</div>
<div class="a" style="left:288.00px;top:550.00px;width:0.60px;height:9.50px;background:#35475a;"></div>
<div class="a" style="left:293.00px;top:552.35px;font-size:6.80px;color:#eef2f6;">SCHWK./AUSW.</div>
<div class="a" style="left:343.00px;top:550.00px;width:0.60px;height:9.50px;background:#35475a;"></div>
<div class="a" style="left:470.60px;top:550.40px;width:17.80px;height:8.60px;background:#233141;overflow:hidden"><div class="a b" style="left:-0.83px;top:2.57px;font-size:5.95px;color:#fff">KARTE</div></div>
<div class="a" style="left:493.90px;top:550.40px;width:15.40px;height:8.60px;background:#233141;overflow:hidden"><div class="a b" style="left:1.68px;top:2.29px;font-size:6.40px;color:#fff">SAT</div></div>
<div class="a" style="left:514.90px;top:550.20px;width:17.00px;height:9.00px;background:#5d92d4;overflow:hidden"><div class="a b" style="left:-0.59px;top:2.57px;font-size:6.30px;color:#101a2c">HÖHE</div></div>
<div class="a" style="left:549.10px;top:550.20px;width:17.20px;height:9.20px;background:linear-gradient(#6a9fd9,#4f86c8);"></div>
<div class="a" style="left:571.40px;top:550.40px;width:16.40px;height:8.80px;background:#233141;"></div>
<svg style="left:0;top:0" width="1000" height="562">
<path d="M552.9,552 H561 L559.6,554.3 L561,556.7 H552.9 L554.3,554.3 Z" fill="#101a2c"/><ellipse cx="557.2" cy="554.4" rx="2.5" ry="1.4" fill="#fff"/><path d="M560.4,554.4 H564.6" stroke="#fff" stroke-width="0.7"/>
<circle cx="579.9" cy="554.7" r="3" fill="#2b3a4b" stroke="#c9d0d7" stroke-width="0.9"/><path d="M578,551.4 h3.8 M578,558 h3.8" stroke="#aeb6be" stroke-width="0.9"/><path d="M583.2,554.7 h1" stroke="#c9d0d7" stroke-width="0.9"/><path d="M579.9,553.2 V554.9 L581,555.6" fill="none" stroke="#c9d0d7" stroke-width="0.6"/>
</svg>
<div class="a" style="left:937.00px;top:552.52px;font-size:6.36px;color:#a3aeb9;">2.11.2024 18:03:41</div>
</div></body></html>
